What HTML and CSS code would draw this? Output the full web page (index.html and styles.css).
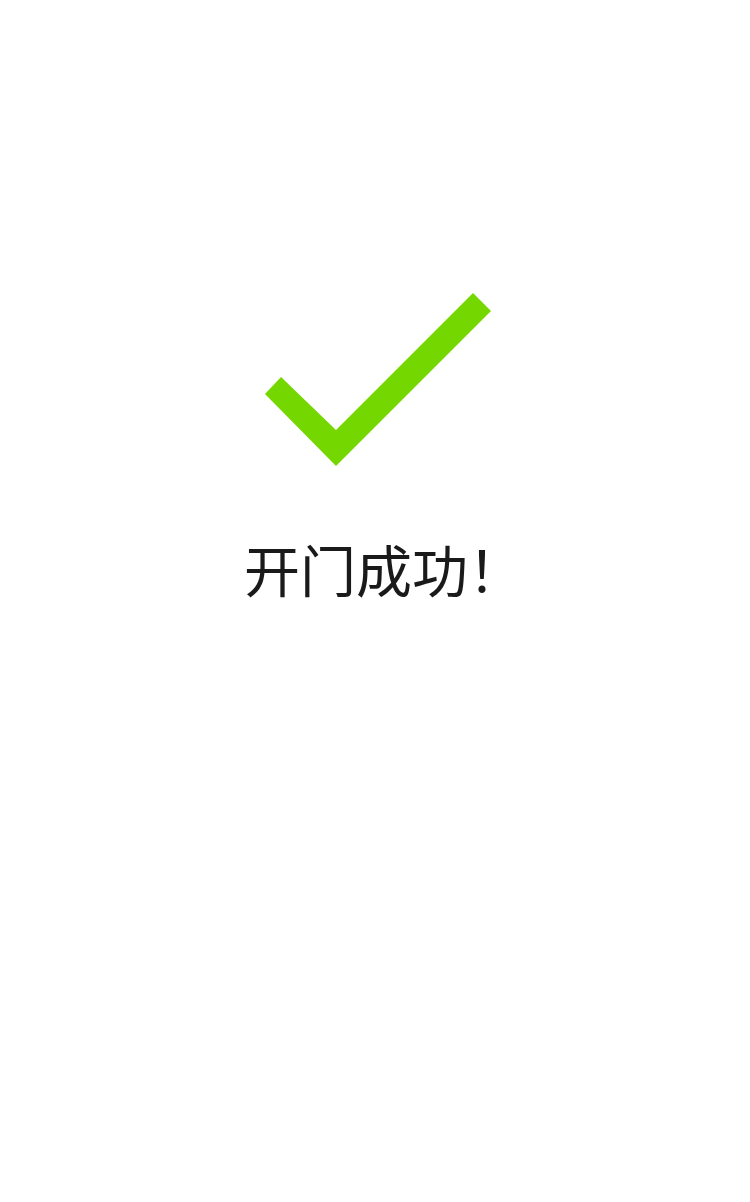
FILE: index.html
```html
<!DOCTYPE html>
<html lang="zh-CN">
<head>
<meta charset="utf-8">
<link rel="stylesheet" href="styles.css">
</head>
<body>
<main class="page">
  <svg class="check" width="750" height="200" viewBox="0 280 750 200" aria-hidden="true">
    <polygon points="281,377 336,430 473,293 491,311 336,466 265,394" fill="#75d700"/>
  </svg>
  <h1 class="title">开门成功！</h1>
</main>
</body>
</html>
```
FILE: styles.css
```css
html, body {
  margin: 0;
  padding: 0;
  background: #ffffff;
}
.page {
  width: 750px;
  height: 1202px;
  display: flex;
  flex-direction: column;
  align-items: center;
  padding-top: 280px;
  box-sizing: border-box;
}
.check {
  display: block;
}
.title {
  margin: 48px 0 0 0;
  padding-left: 18px;
  font-family: "Noto Sans CJK SC", sans-serif;
  font-weight: 400;
  font-size: 56px;
  line-height: 80px;
  color: #1a1a1a;
}
```
